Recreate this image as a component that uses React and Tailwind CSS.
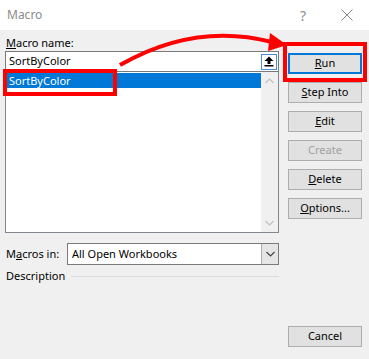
import React from 'react';

const font = { fontFamily: '"Noto Sans", "Open Sans", sans-serif' };

function Btn({ children, primary, disabled }) {
  return (
    <div
      className={
        'h-[21px] w-[74px] flex items-center justify-center text-[11px] bg-[#e1e1e1] ' +
        (primary ? 'border-2 border-[#0078d7]' : 'border border-[#adadad]') +
        (disabled ? ' text-[#a0a0a0]' : ' text-black')
      }
    >
      {children}
    </div>
  );
}

function Chevron({ up, color = '#c2c2c2' }) {
  return (
    <svg width="9" height="6" viewBox="0 0 9 6">
      <path d={up ? 'M0.5 5 L4.5 1 L8.5 5' : 'M0.5 1 L4.5 5 L8.5 1'} fill="none" stroke={color} strokeWidth="1.2" />
    </svg>
  );
}

export default function App() {
  return (
    <div className="relative w-[369px] h-[359px] bg-[#f0f0f0] overflow-hidden" style={font}>
      {/* title bar */}
      <div className="h-[30px] bg-white flex items-center pl-[7px] pr-[16px]">
        <span className="text-[12px] text-[#8c8c8c]">Macro</span>
        <span className="ml-auto text-[14px] text-[#8c8c8c] mr-[35px]">?</span>
        <svg width="12" height="12" viewBox="0 0 12 12">
          <path d="M0.5 0.5 L11.5 11.5 M11.5 0.5 L0.5 11.5" stroke="#8c8c8c" strokeWidth="1" />
        </svg>
      </div>

      <div className="flex pl-[5px]">
        {/* left column */}
        <div className="w-[274px] flex flex-col">
          <div className="text-[11px] leading-[15px] mt-[5px] pl-[1px] h-[16px]">
            <span className="underline">M</span>acro name:
          </div>
          <div className="h-[21px] bg-white border border-[#7a7a7a] flex items-center pl-[3px] pr-[1px]">
            <span className="text-[11px]">SortByColor</span>
            <div className="ml-auto w-[16px] h-[16px] border border-[#4a90d9] bg-white flex items-center justify-center">
              <svg width="10" height="11" viewBox="0 0 10 11">
                <path d="M5 0.5 L9.5 5 L6.5 5 L6.5 8 L3.5 8 L3.5 5 L0.5 5 Z" fill="#000" />
                <rect x="0.5" y="9" width="9" height="1.5" fill="#000" />
              </svg>
            </div>
          </div>
          <div className="h-[161px] bg-white border border-[#828790] border-t-0 flex">
            <div className="flex-1 pt-[1px] pl-[1px]">
              <div className="h-[15px] bg-[#0078d7] text-white text-[11px] leading-[15px] pl-[2px]">SortByColor</div>
            </div>
            <div className="w-[17px] bg-[#f0f0f0] flex flex-col items-center justify-between py-[6px]">
              <Chevron up />
              <Chevron />
            </div>
          </div>
          <div className="flex items-center mt-[10px] h-[22px]">
            <span className="text-[11px] w-[62px] pl-[1px]">
              M<span className="underline">a</span>cros in:
            </span>
            <div className="flex-1 h-[22px] bg-white border border-[#7a7a7a] flex items-center">
              <span className="text-[11px] pl-[4px]">All Open Workbooks</span>
              <div className="ml-auto w-[17px] h-full bg-[#e5e5e5] border-l border-[#adadad] flex items-center justify-center">
                <Chevron color="#444" />
              </div>
            </div>
          </div>
          <div className="flex items-center mt-[1px] h-[20px]">
            <span className="text-[11px] pl-[1px]">Description</span>
            <div className="flex-1 ml-[6px] h-px bg-[#dcdcdc]" />
          </div>
        </div>

        {/* right column */}
        <div className="ml-[9px] pt-[23px] flex flex-col gap-[8px]">
          <Btn primary><span className="underline">R</span>un</Btn>
          <Btn><span className="underline">S</span>tep Into</Btn>
          <Btn><span className="underline">E</span>dit</Btn>
          <Btn disabled>Create</Btn>
          <Btn><span className="underline">D</span>elete</Btn>
          <Btn><span className="underline">O</span>ptions...</Btn>
          <div className="mt-[99px]">
            <Btn>Cancel</Btn>
          </div>
        </div>
      </div>

      {/* annotations */}
      <div className="absolute left-[3px] top-[69px] w-[114px] h-[27px] border-4 border-[#ff0000]" />
      <div className="absolute left-[283px] top-[42px] w-[84px] h-[40px] border-4 border-[#ff0000]" />
      <svg className="absolute left-0 top-0" width="369" height="359" viewBox="0 0 369 359">
        <path d="M120 65 Q 195 22 272 42" fill="none" stroke="#ff0000" strokeWidth="4" />
        <polygon points="287,45 270,33 268,51" fill="#ff0000" />
      </svg>
    </div>
  );
}
